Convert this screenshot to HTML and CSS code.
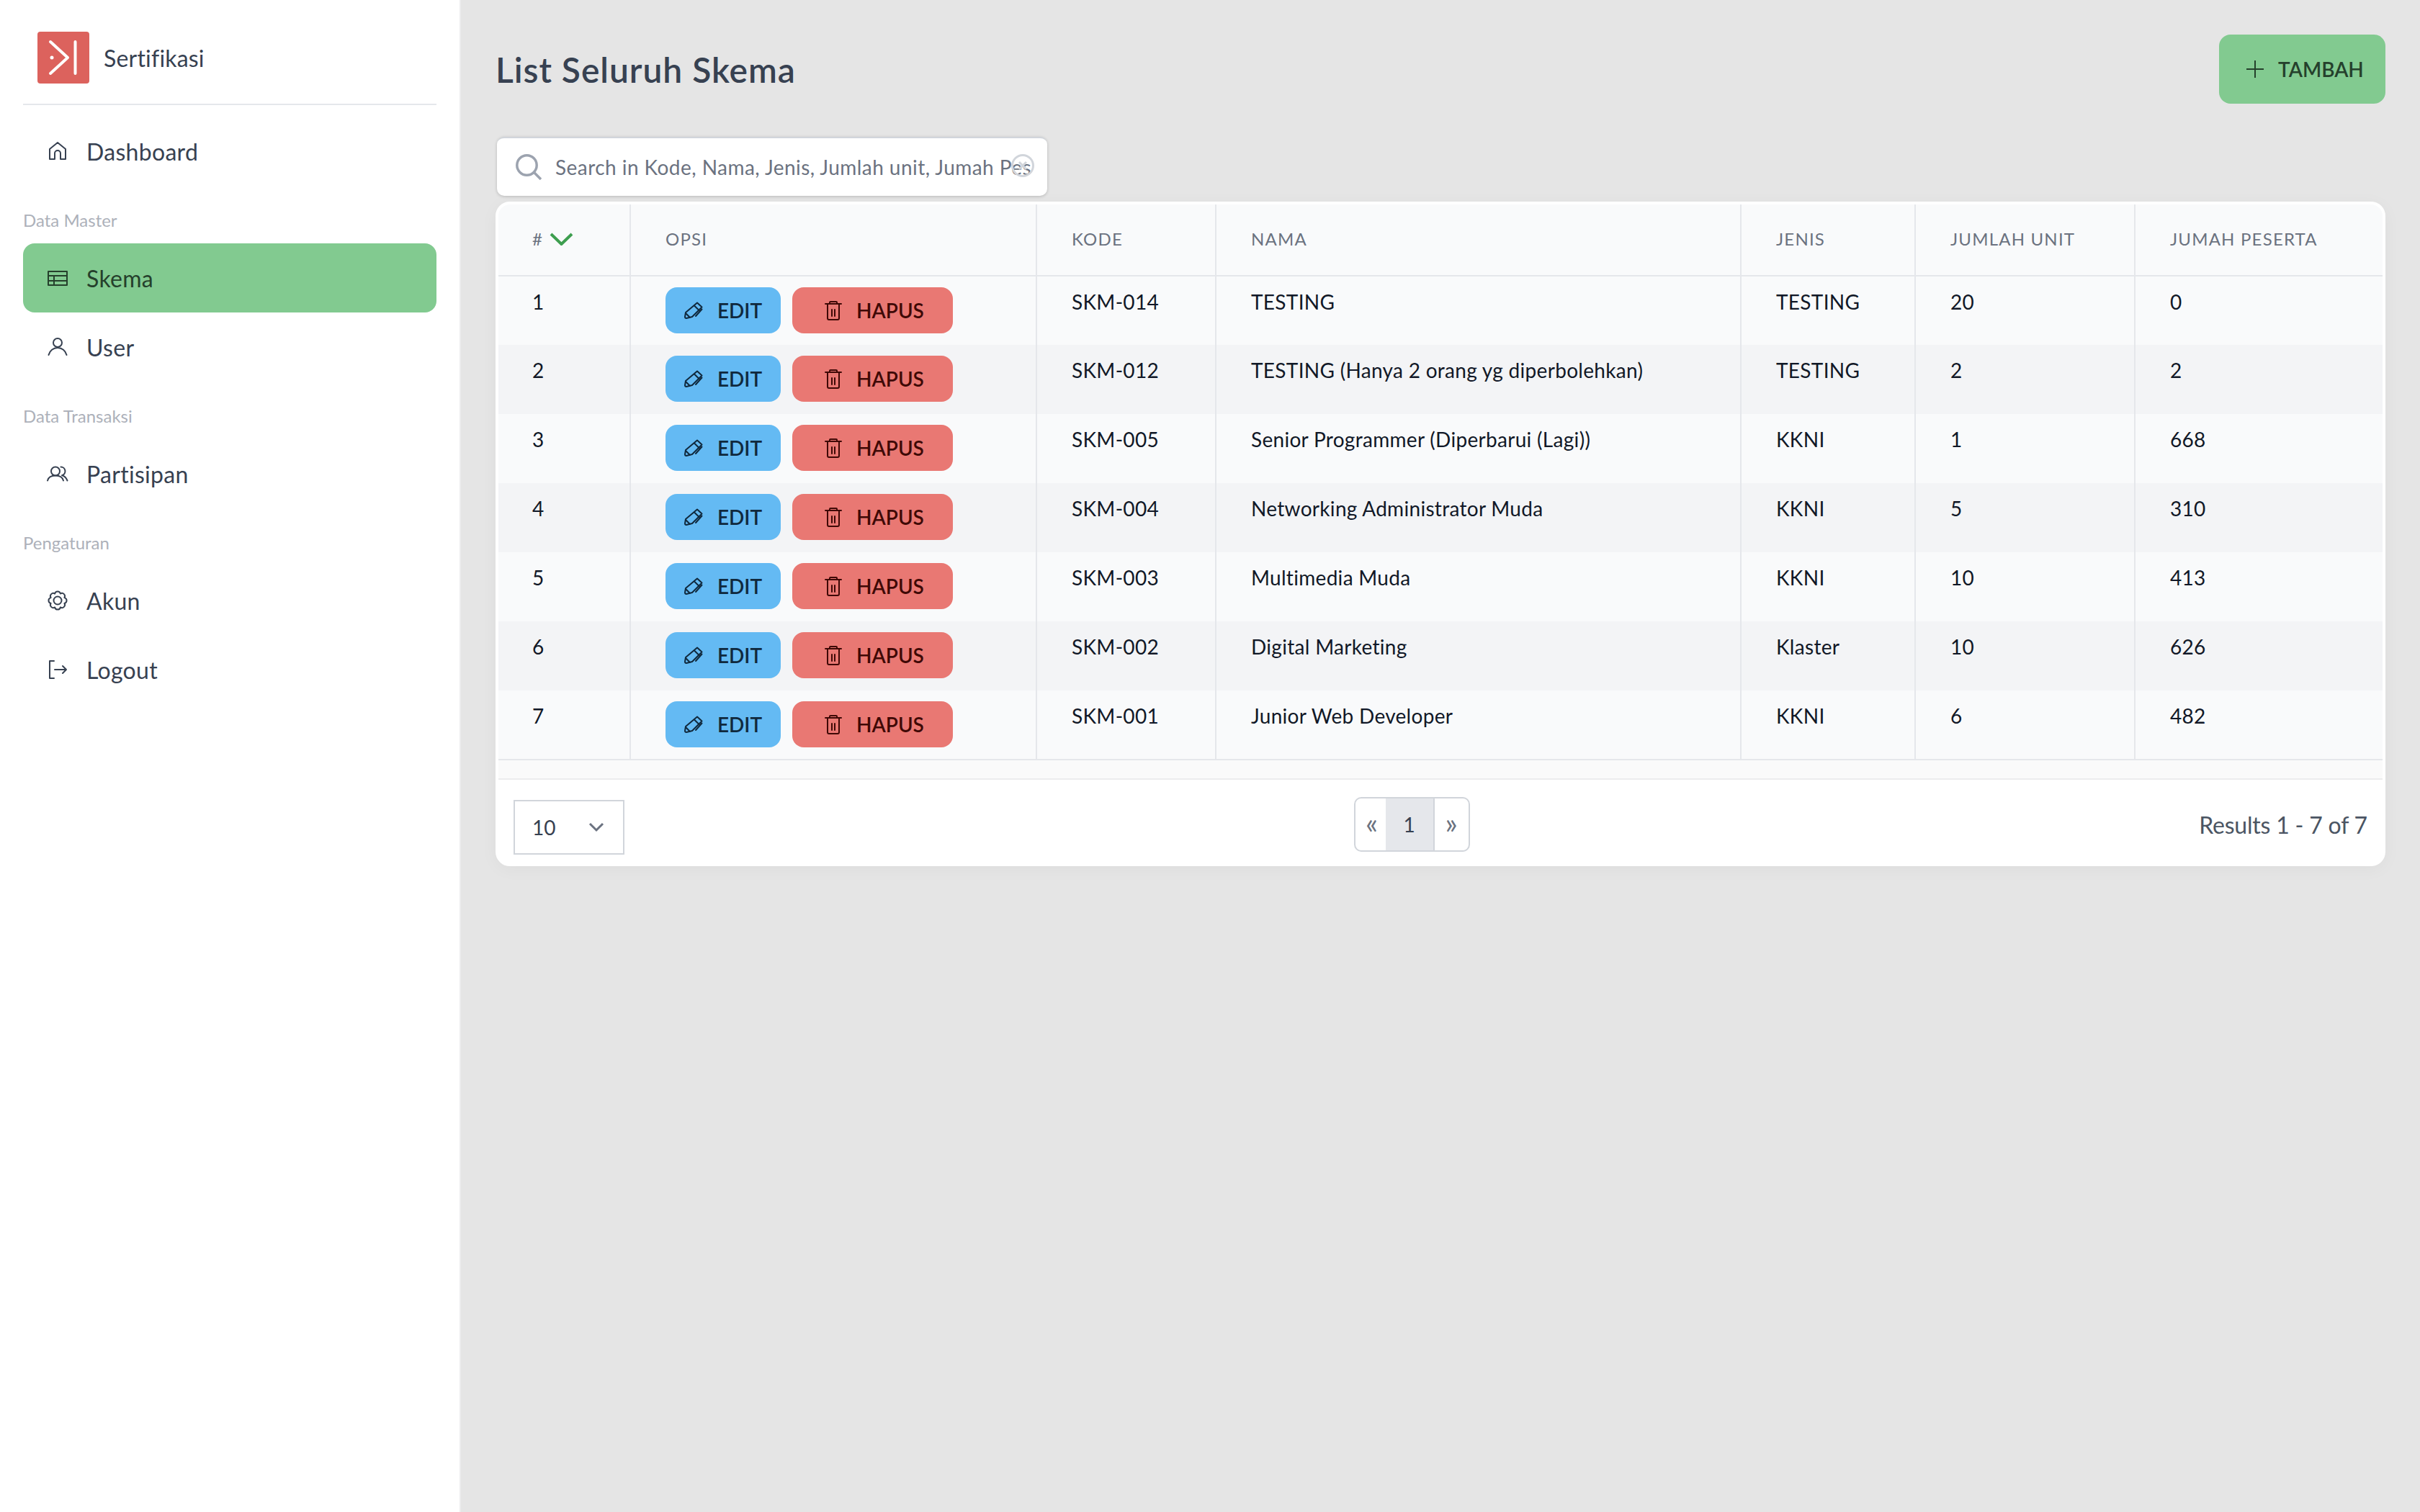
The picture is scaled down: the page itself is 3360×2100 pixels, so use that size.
FILE: index.html
```html
<!DOCTYPE html>
<html>
<head>
    <title>List Seluruh Skema</title>
    <link rel="stylesheet" href="styles.css">
</head>
<body>
    <svg class="sprite" width="0" height="0">
        <symbol id="i-edit" viewBox="0 0 26 24"><path d="M18 1.500l6.500 6L11 21l-8 2q-2 0-2-2l1-6zM14 5.500l6.500 6.500M2 16l6 6M24.500 10.500L16 20"/></symbol>
        <symbol id="i-trash" viewBox="-1 -1 24 28"><path d="M0 4h22M3 4v20a2 2 0 0 0 2 2h12a2 2 0 0 0 2-2V4M6 4V2a1 1 0 0 1 1-1h8a1 1 0 0 1 1 1v2M9 12v9M13 12v9"/></symbol>
    </svg>

    <div class="layout">
        <aside class="sidebar">
            <div class="brand">
                <svg class="brand-logo" viewBox="0 0 72 72">
                    <rect width="72" height="72" rx="4" fill="#dc625d"/>
                    <path d="M18 14l24 22-24 22M52.500 14v44" fill="none" stroke="#fff" stroke-width="4" stroke-linecap="round" stroke-linejoin="round"/>
                    <circle cx="20" cy="36" r="2.500" fill="#fff"/>
                </svg>
                <span>Sertifikasi</span>
            </div>

            <nav class="menu">
                <a class="menu-item">
                    <svg class="menu-icon" viewBox="0 0 32 32"><path d="M5 27V13L16 4l11 9v14h-7v-8a4 4 0 0 0-8 0v8z"/></svg>
                    Dashboard
                </a>
                <div class="menu-label">Data Master</div>
                <a class="menu-item active">
                    <svg class="menu-icon" viewBox="0 0 32 32"><path d="M3 7h26v19H3zM3 13h26M3 20h26M11 13v13"/></svg>
                    Skema
                </a>
                <a class="menu-item">
                    <svg class="menu-icon" viewBox="0 0 32 32"><circle cx="16" cy="10" r="6"/><path d="M3.500 27C5 21 10 17 16 17s11 4 12.500 10"/></svg>
                    User
                </a>
                <div class="menu-label">Data Transaksi</div>
                <a class="menu-item">
                    <svg class="menu-icon" viewBox="0 0 32 32"><circle cx="13" cy="12.500" r="6"/><path d="M2 25.500c1-4 5-7 11-7s10 3 11 7M20.500 6.500a6 6 0 0 1 1.500 11.800c3.500.8 6 3.500 7.500 7.200"/></svg>
                    Partisipan
                </a>
                <div class="menu-label">Pengaturan</div>
                <a class="menu-item">
                    <svg class="menu-icon" viewBox="0 0 32 32"><circle cx="16" cy="16" r="5.500"/><path d="M25.420 12.100A4 4 0 0 1 25.420 19.900 4 4 0 0 1 19.900 25.420 4 4 0 0 1 12.100 25.420 4 4 0 0 1 6.580 19.900 4 4 0 0 1 6.580 12.100 4 4 0 0 1 12.100 6.580 4 4 0 0 1 19.900 6.580 4 4 0 0 1 25.420 12.100z"/></svg>
                    Akun
                </a>
                <a class="menu-item">
                    <svg class="menu-icon" viewBox="0 0 32 32"><path d="M11 4H5v24h6M12 16h16M23 11l5 5-5 5"/></svg>
                    Logout
                </a>
            </nav>
        </aside>

        <main class="content">
            <div class="page-head">
                <h1>List Seluruh Skema</h1>
                <button class="btn-add">
                    <svg class="plus" viewBox="0 0 24 24"><path d="M12 0v24M0 12h24"/></svg>
                    TAMBAH
                </button>
            </div>

            <div class="search">
                <svg class="search-icon" viewBox="0 0 36 36"><circle cx="15.500" cy="15.500" r="13.700"/><path d="M25 25l10 10"/></svg>
                <input class="search-input" type="text" placeholder="Search in Kode, Nama, Jenis, Jumlah unit, Jumah Peserta">
                <svg class="search-clear" viewBox="0 0 32 32"><circle cx="16" cy="16" r="14.500"/><path d="M11 11l10 10M21 11L11 21"/></svg>
            </div>

            <div class="card">
                <table class="grid">
                    <colgroup>
                        <col class="c-no"><col class="c-opsi"><col class="c-kode"><col class="c-nama"><col class="c-jenis"><col class="c-unit"><col class="c-peserta">
                    </colgroup>
                    <thead>
                        <tr>
                            <th><span class="sort">#<svg viewBox="0 0 33 18"><path d="M2 2l14.500 14L31 2"/></svg></span></th>
                            <th>Opsi</th>
                            <th>Kode</th>
                            <th>Nama</th>
                            <th>Jenis</th>
                            <th>Jumlah Unit</th>
                            <th>Jumah Peserta</th>
                        </tr>
                    </thead>
                    <tbody>
                        <tr>
                            <td>1</td>
                            <td><div class="actions">
                                <button class="btn btn-edit"><svg><use href="#i-edit"/></svg>EDIT</button>
                                <button class="btn btn-del"><svg><use href="#i-trash"/></svg>HAPUS</button>
                            </div></td>
                            <td>SKM-014</td><td>TESTING</td><td>TESTING</td><td>20</td><td>0</td>
                        </tr>
                        <tr>
                            <td>2</td>
                            <td><div class="actions">
                                <button class="btn btn-edit"><svg><use href="#i-edit"/></svg>EDIT</button>
                                <button class="btn btn-del"><svg><use href="#i-trash"/></svg>HAPUS</button>
                            </div></td>
                            <td>SKM-012</td><td>TESTING (Hanya 2 orang yg diperbolehkan)</td><td>TESTING</td><td>2</td><td>2</td>
                        </tr>
                        <tr>
                            <td>3</td>
                            <td><div class="actions">
                                <button class="btn btn-edit"><svg><use href="#i-edit"/></svg>EDIT</button>
                                <button class="btn btn-del"><svg><use href="#i-trash"/></svg>HAPUS</button>
                            </div></td>
                            <td>SKM-005</td><td>Senior Programmer (Diperbarui (Lagi))</td><td>KKNI</td><td>1</td><td>668</td>
                        </tr>
                        <tr>
                            <td>4</td>
                            <td><div class="actions">
                                <button class="btn btn-edit"><svg><use href="#i-edit"/></svg>EDIT</button>
                                <button class="btn btn-del"><svg><use href="#i-trash"/></svg>HAPUS</button>
                            </div></td>
                            <td>SKM-004</td><td>Networking Administrator Muda</td><td>KKNI</td><td>5</td><td>310</td>
                        </tr>
                        <tr>
                            <td>5</td>
                            <td><div class="actions">
                                <button class="btn btn-edit"><svg><use href="#i-edit"/></svg>EDIT</button>
                                <button class="btn btn-del"><svg><use href="#i-trash"/></svg>HAPUS</button>
                            </div></td>
                            <td>SKM-003</td><td>Multimedia Muda</td><td>KKNI</td><td>10</td><td>413</td>
                        </tr>
                        <tr>
                            <td>6</td>
                            <td><div class="actions">
                                <button class="btn btn-edit"><svg><use href="#i-edit"/></svg>EDIT</button>
                                <button class="btn btn-del"><svg><use href="#i-trash"/></svg>HAPUS</button>
                            </div></td>
                            <td>SKM-002</td><td>Digital Marketing</td><td>Klaster</td><td>10</td><td>626</td>
                        </tr>
                        <tr>
                            <td>7</td>
                            <td><div class="actions">
                                <button class="btn btn-edit"><svg><use href="#i-edit"/></svg>EDIT</button>
                                <button class="btn btn-del"><svg><use href="#i-trash"/></svg>HAPUS</button>
                            </div></td>
                            <td>SKM-001</td><td>Junior Web Developer</td><td>KKNI</td><td>6</td><td>482</td>
                        </tr>
                    </tbody>
                </table>
                <div class="band"></div>
                <div class="card-foot">
                    <div class="per-page">
                        <span>10</span>
                        <svg viewBox="0 0 22 14"><path d="M2 2l9 9 9-9"/></svg>
                    </div>
                    <div class="pager">
                        <span class="page-arrow page-prev">«</span>
                        <span class="page-current">1</span>
                        <span class="page-arrow">»</span>
                    </div>
                    <div class="results">Results 1 - 7 of 7</div>
                </div>
            </div>
        </main>
    </div>
</body>
</html>
```

FILE: styles.css
```css
* {
    box-sizing: border-box;
}

body {
    margin: 0;
    font-family: "Lato", "Noto Sans", sans-serif;
    background-color: #e5e5e5;
    color: #111827;
}

.sprite {
    position: absolute;
}

.layout {
    display: flex;
    min-height: 2100px;
}

/* sidebar */
.sidebar {
    width: 640px;
    flex-shrink: 0;
    padding: 0 32px;
    background-color: #fff;
    border-right: 2px solid #ececee;
}

.brand {
    display: flex;
    align-items: center;
    gap: 20px;
    height: 146px;
    padding: 44px 0 28px 20px;
    border-bottom: 2px solid #e5e7eb;
    font-size: 32px;
    letter-spacing: 0.2px;
    color: #374151;
}

.brand-logo {
    width: 72px;
    height: 72px;
}

.menu {
    margin-top: 16px;
}

.menu-item {
    display: flex;
    align-items: center;
    gap: 24px;
    height: 96px;
    padding-left: 32px;
    border-radius: 16px;
    font-size: 32px;
    letter-spacing: 0.3px;
    color: #374151;
}

.menu-item.active {
    background-color: #82ca90;
    color: #25402c;
}

.menu-icon {
    width: 32px;
    height: 32px;
    fill: none;
    stroke: currentColor;
    stroke-width: 2;
    stroke-linejoin: round;
    stroke-linecap: round;
}

.menu-label {
    padding: 32px 0 16px;
    font-size: 24px;
    line-height: 32px;
    color: #adb1ba;
}

/* main area */
.content {
    flex: 1;
    padding: 48px 48px 0;
}

.page-head {
    display: flex;
    justify-content: space-between;
    align-items: center;
    margin-bottom: 46px;
}

h1 {
    margin: 0;
    font-size: 48px;
    font-weight: 600;
    letter-spacing: 0.95px;
    color: #374151;
}

.btn-add {
    display: flex;
    align-items: center;
    gap: 20px;
    width: 231px;
    height: 96px;
    padding: 0 0 0 38px;
    border: none;
    border-radius: 16px;
    background-color: #82ca90;
    color: #25402c;
    font-family: inherit;
    font-size: 28px;
    font-weight: 600;
}

.plus {
    width: 24px;
    height: 24px;
    fill: none;
    stroke: currentColor;
    stroke-width: 2;
}

.search {
    position: relative;
    display: flex;
    align-items: center;
    gap: 19px;
    width: 764px;
    height: 82px;
    margin: 0 0 8px 2px;
    padding: 0 26px;
    background-color: #fff;
    border-top: 2px solid #d1d5db;
    border-radius: 10px;
    box-shadow: 0 1px 4px rgba(0, 0, 0, 0.2);
}

.search-icon {
    width: 36px;
    height: 36px;
    flex-shrink: 0;
    fill: none;
    stroke: #9ca3af;
    stroke-width: 3.500;
}

.search-input {
    width: 661px;
    flex-shrink: 0;
    padding: 0;
    border: none;
    outline: none;
    background: none;
    font-family: inherit;
    font-size: 28px;
    letter-spacing: 0.45px;
    color: #111827;
}

.search-input::placeholder {
    color: #6b7280;
    opacity: 1;
}

.search-clear {
    position: absolute;
    left: 714px;
    top: 22px;
    width: 32px;
    height: 32px;
    fill: none;
    stroke: #d1d5db;
    stroke-width: 3;
}

.card {
    border: 4px solid #fff;
    border-radius: 20px;
    background-color: #fff;
    overflow: hidden;
    box-shadow: 0 4px 24px rgba(0, 0, 0, 0.04);
}

/* table */
.grid {
    width: 100%;
    table-layout: fixed;
    border-collapse: collapse;
    font-size: 28px;
}

.c-no { width: 183px; }
.c-opsi { width: 564px; }
.c-kode { width: 249px; }
.c-nama { width: 729px; }
.c-jenis { width: 242px; }
.c-unit { width: 305px; }
.c-peserta { width: 344px; }

.grid th {
    height: 99px;
    padding: 0 48px 3px;
    background-color: #f9fafb;
    border-bottom: 2px solid #e5e7eb;
    border-left: 2px solid #e5e7eb;
    text-align: left;
    text-transform: uppercase;
    font-size: 24px;
    font-weight: 400;
    letter-spacing: 1.200px;
    color: #6b7280;
}

.grid td {
    height: 96px;
    padding: 15px 48px 16px;
    vertical-align: top;
    line-height: 40px;
    letter-spacing: 0.3px;
    background-color: #f9fafb;
    border-left: 2px solid #e5e7eb;
    color: #111827;
}

.grid th:first-child,
.grid td:first-child {
    padding-left: 47px;
    border-left: none;
}

.grid tbody tr:nth-child(even) td {
    background-color: #f3f4f6;
}

.grid tbody tr:last-child td {
    border-bottom: 2px solid #e5e7eb;
}

.sort {
    display: flex;
    align-items: center;
    gap: 9px;
}

.sort svg {
    width: 33px;
    height: 18px;
    fill: none;
    stroke: #3e9e4f;
    stroke-width: 4;
}

.actions {
    display: flex;
    gap: 16px;
}

.btn {
    display: flex;
    align-items: center;
    justify-content: center;
    gap: 20px;
    height: 64px;
    padding: 0;
    border: none;
    border-radius: 16px;
    font-family: inherit;
    font-size: 28px;
    font-weight: 600;
}

.btn svg {
    fill: none;
    stroke: currentColor;
    stroke-width: 2;
    stroke-linejoin: round;
    stroke-linecap: round;
}

.btn-edit {
    width: 160px;
    background-color: #64baf3;
    color: #10293d;
}

.btn-edit svg {
    width: 26px;
    height: 24px;
}

.btn-del {
    width: 223px;
    padding-left: 5px;
    background-color: #e97873;
    color: #3f0906;
}

.btn-del svg {
    width: 24px;
    height: 28px;
}

.band {
    height: 27px;
    background-color: #fafafa;
    border-bottom: 2px solid #ececee;
}

/* footer */
.card-foot {
    display: flex;
    justify-content: space-between;
    align-items: center;
    height: 116px;
    padding: 8px 21px 0;
}

.per-page {
    display: flex;
    justify-content: space-between;
    align-items: center;
    width: 154px;
    height: 76px;
    margin-top: 8px;
    padding: 0 26px 0 24px;
    border: 2px solid #d1d5db;
    font-size: 28px;
    color: #374151;
}

.per-page svg {
    width: 22px;
    height: 14px;
    fill: none;
    stroke: #6b7280;
    stroke-width: 3;
}

.pager {
    display: flex;
    width: 161px;
    height: 76px;
    border: 2px solid #d1d5db;
    border-radius: 10px;
    font-size: 28px;
    overflow: hidden;
}

.page-arrow {
    display: flex;
    align-items: center;
    justify-content: center;
    flex: 1;
    padding-bottom: 4px;
    font-size: 40px;
    color: #6b7280;
}

.page-prev {
    flex: 0 0 42px;
    padding-left: 4px;
}

.page-current {
    display: flex;
    align-items: center;
    justify-content: center;
    width: 68px;
    background-color: #e5e7eb;
    border-right: 2px solid #d1d5db;
    color: #374151;
}

.results {
    font-size: 32px;
    letter-spacing: -0.2px;
    color: #4b5563;
}
```
